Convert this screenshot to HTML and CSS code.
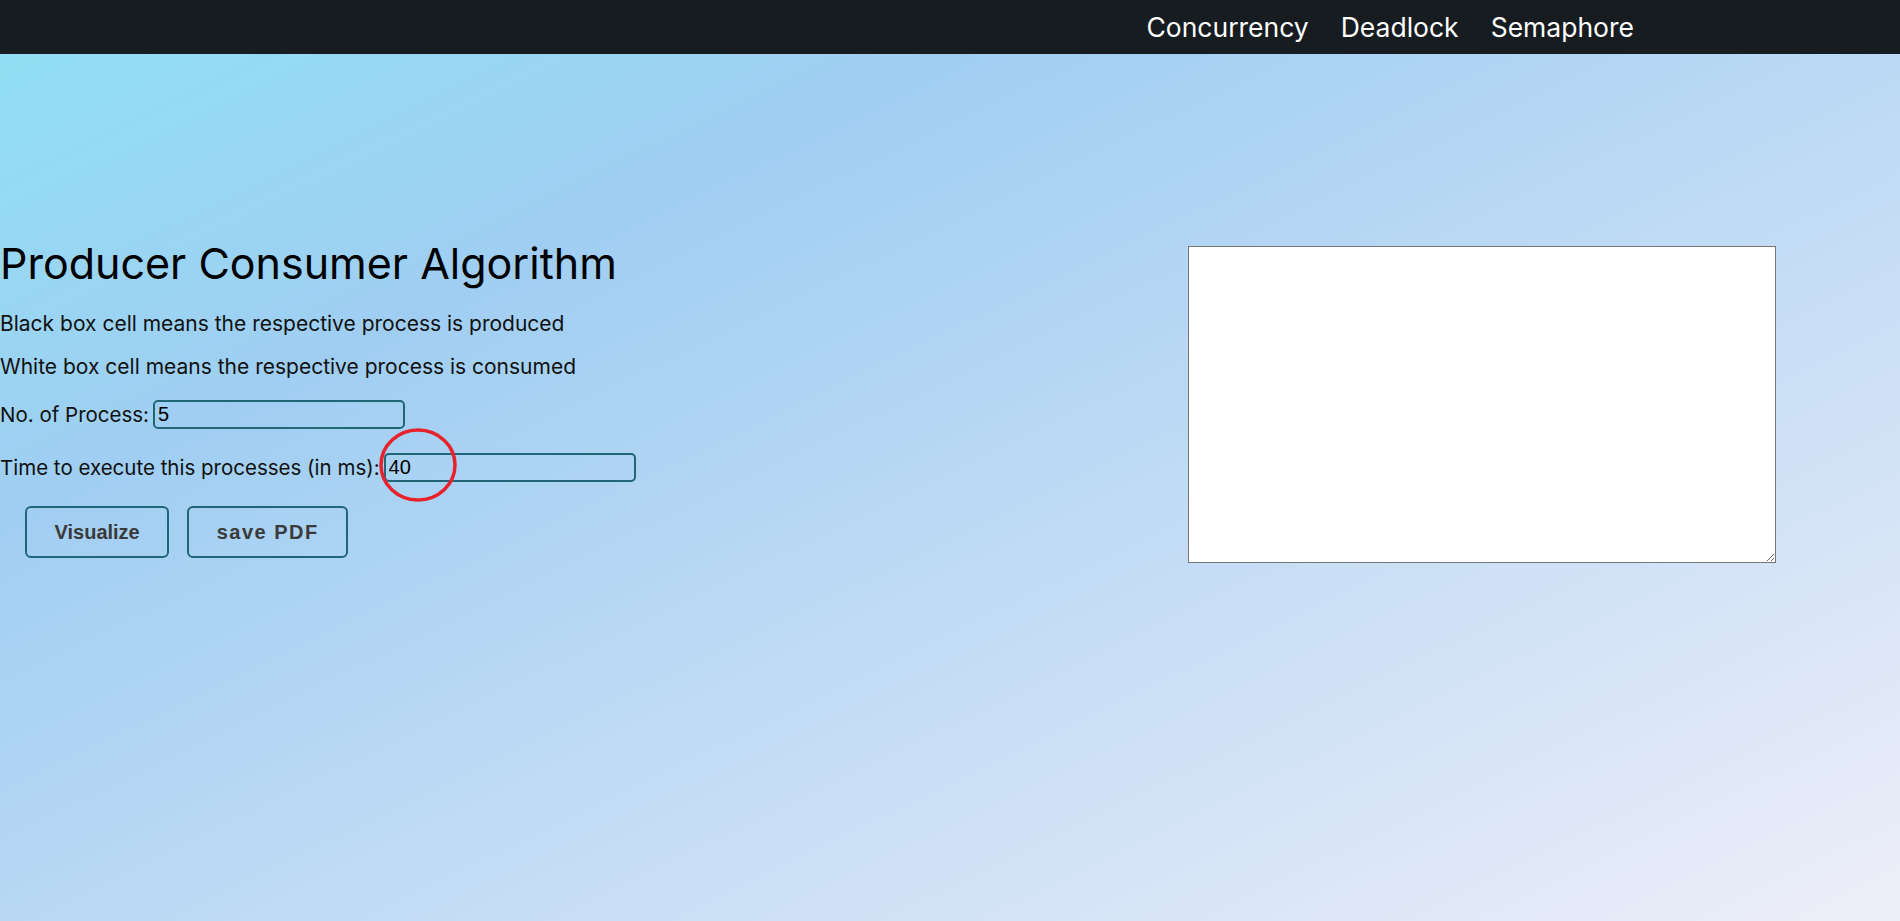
FILE: index.html
```html
<!DOCTYPE html>
<html lang="en">
<head>
    <meta charset="UTF-8">
    <meta name="viewport" content="width=device-width, initial-scale=1.0">
    <title>Producer Consumer Algorithm</title>
    <link rel="stylesheet" href="styles.css">
</head>
<body>
    <nav class="navbar">
        <a href="#" class="nav-link">Concurrency</a>
        <a href="#" class="nav-link">Deadlock</a>
        <a href="#" class="nav-link">Semaphore</a>
    </nav>

    <div class="main">
        <div class="controls">
            <h1 class="title">Producer Consumer Algorithm</h1>
            <p class="note">Black box cell means the respective process is produced</p>
            <p class="note">White box cell means the respective process is consumed</p>

            <div class="field">
                <label for="process">No. of Process:</label>
                <input type="text" id="process" class="field-input" value="5">
            </div>
            <div class="field">
                <label for="time">Time to execute this processes (in ms):</label>
                <span class="marked">
                    <input type="text" id="time" class="field-input" value="40">
                    <svg class="mark" width="80" height="76" viewBox="0 0 80 76">
                        <ellipse cx="40" cy="38" rx="37" ry="35" fill="none" stroke="#e8222b" stroke-width="3.5"/>
                    </svg>
                </span>
            </div>

            <div class="buttons">
                <button type="button" class="btn">Visualize</button>
                <button type="button" class="btn btn-pdf">save PDF</button>
            </div>
        </div>

        <textarea class="output"></textarea>
    </div>
</body>
</html>
```

FILE: styles.css
```css
html {
    height: 100%;
}

body {
    margin: 0;
    min-height: 100%;
    font-family: Inter, "Noto Sans", sans-serif;
    color: #111;
    background: linear-gradient(to bottom right, #8fe1f4 0%, #a0cef2 28%, #eeeef9 100%);
}

.navbar {
    height: 54px;
    background-color: #171c21;
    display: flex;
    align-items: center;
    justify-content: flex-end;
    gap: 32px;
    padding-right: 266px;
}

.nav-link {
    color: #fff;
    text-decoration: none;
    font-size: 26.5px;
}

.main {
    display: flex;
    justify-content: space-between;
    align-items: flex-start;
    padding-top: 184px;
    padding-right: 124px;
}

.title {
    margin: 0;
    font-size: 43px;
    line-height: 50px;
    font-weight: 400;
    color: #000;
}

.note {
    margin: 0;
    font-size: 21px;
    line-height: 24px;
}

.title + .note {
    margin-top: 24px;
}

.note + .note {
    margin-top: 19px;
}

.field {
    display: flex;
    align-items: center;
    gap: 4px;
    height: 29px;
    margin-top: 24px;
    font-size: 20.5px;
    line-height: 24px;
}

.note + .field {
    margin-top: 21px;
}

.field-input {
    box-sizing: border-box;
    width: 252px;
    height: 29px;
    padding: 0 3px;
    border: 2px solid #216676;
    border-radius: 5px;
    background: transparent;
    font-family: "Liberation Sans", Arial, sans-serif;
    font-size: 20px;
    color: #000;
}

.marked {
    position: relative;
    display: inline-block;
    height: 29px;
}

.mark {
    position: absolute;
    left: -6px;
    top: -26px;
    pointer-events: none;
}

.buttons {
    display: flex;
    gap: 18px;
    margin-top: 24px;
    padding-left: 25px;
}

.btn {
    height: 52px;
    padding: 0 27.5px;
    border: 2px solid #216676;
    border-radius: 6px;
    background: transparent;
    font-family: "Liberation Sans", Arial, sans-serif;
    font-size: 20px;
    font-weight: bold;
    color: #3a3a3a;
    cursor: pointer;
}

.btn-pdf {
    letter-spacing: 1.5px;
}

.output {
    box-sizing: border-box;
    width: 588px;
    height: 317px;
    margin: 8px 0 0 0;
    border: 1px solid #767676;
    border-radius: 0;
    background: #fff;
}
```
